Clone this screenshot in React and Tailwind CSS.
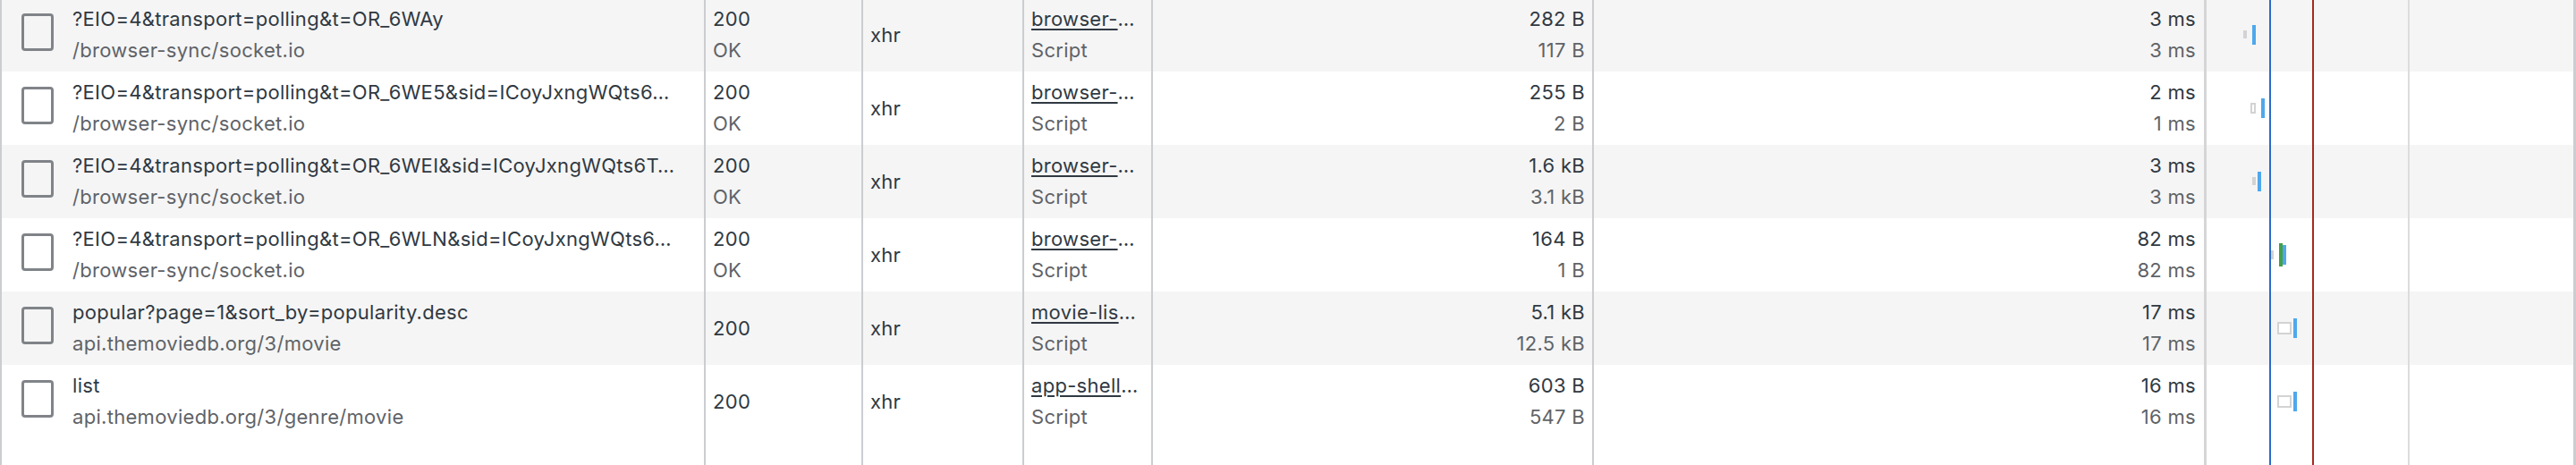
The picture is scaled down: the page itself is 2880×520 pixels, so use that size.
import React from "react";

// network panel rows, waterfall bar offsets are px from the waterfall column's left edge
const rows = [
  {
    name: "?EIO=4&transport=polling&t=OR_6WAy",
    path: "/browser-sync/socket.io",
    status: "200",
    statusText: "OK",
    type: "xhr",
    initiator: "browser-",
    size: "282 B",
    resource: "117 B",
    time: "3 ms",
    latency: "3 ms",
    bars: { gray: [41, 4, 36, 9], blue: 51 },
  },
  {
    name: "?EIO=4&transport=polling&t=OR_6WE5&sid=ICoyJxngWQts6…",
    path: "/browser-sync/socket.io",
    status: "200",
    statusText: "OK",
    type: "xhr",
    initiator: "browser-",
    size: "255 B",
    resource: "2 B",
    time: "2 ms",
    latency: "1 ms",
    bars: { box: [49, 6, 35, 12], blue: 61 },
  },
  {
    name: "?EIO=4&transport=polling&t=OR_6WEI&sid=ICoyJxngWQts6T…",
    path: "/browser-sync/socket.io",
    status: "200",
    statusText: "OK",
    type: "xhr",
    initiator: "browser-",
    size: "1.6 kB",
    resource: "3.1 kB",
    time: "3 ms",
    latency: "3 ms",
    bars: { gray: [51, 4, 36, 9], blue: 57 },
  },
  {
    name: "?EIO=4&transport=polling&t=OR_6WLN&sid=ICoyJxngWQts6…",
    path: "/browser-sync/socket.io",
    status: "200",
    statusText: "OK",
    type: "xhr",
    initiator: "browser-",
    size: "164 B",
    resource: "1 B",
    time: "82 ms",
    latency: "82 ms",
    bars: { gray: [72, 3, 36, 10], green: 81, blue: 85 },
  },
  {
    name: "popular?page=1&sort_by=popularity.desc",
    path: "api.themoviedb.org/3/movie",
    status: "200",
    type: "xhr",
    initiator: "movie-lis",
    size: "5.1 kB",
    resource: "12.5 kB",
    time: "17 ms",
    latency: "17 ms",
    bars: { box: [79, 16, 34, 14], blue: 97 },
  },
  {
    name: "list",
    path: "api.themoviedb.org/3/genre/movie",
    status: "200",
    type: "xhr",
    initiator: "app-shell",
    size: "603 B",
    resource: "547 B",
    time: "16 ms",
    latency: "16 ms",
    bars: { box: [79, 16, 34, 14], blue: 97 },
  },
];

const divider = "border-r-2 border-[#cbcdd1]";

function FileIcon() {
  return (
    <div className="mt-[17px] h-[42px] w-[36px] shrink-0 self-start rounded-[4px] border-[3px] border-[#808488]" />
  );
}

function Waterfall({ bars }) {
  return (
    <div className="relative flex-1">
      {bars.gray && (
        <div
          className="absolute bg-[#d3d3d3]"
          style={{ left: bars.gray[0], width: bars.gray[1], top: bars.gray[2], height: bars.gray[3] }}
        />
      )}
      {bars.box && (
        <div
          className="absolute border-2 border-[#d3d3d3] bg-white"
          style={{ left: bars.box[0], width: bars.box[1], top: bars.box[2], height: bars.box[3] }}
        />
      )}
      {bars.green != null && (
        <div className="absolute top-[28px] h-[26px] w-[4px] bg-[#43a047]" style={{ left: bars.green }} />
      )}
      <div className="absolute top-[30px] h-[22px] w-[4px] bg-[#4fa8ec]" style={{ left: bars.blue }} />
    </div>
  );
}

function Row({ row, striped }) {
  return (
    <div className={`flex h-[82px] shrink-0 ${striped ? "bg-[#f5f5f5]" : "bg-white"}`}>
      <div className={`flex w-[787px] shrink-0 items-center gap-[21px] pl-[22px] pr-[9px] ${divider}`}>
        <FileIcon />
        <div className="min-w-0 leading-[35px]">
          <div className="truncate text-[#303942]">{row.name}</div>
          <div className="truncate text-[#5f6368]">{row.path}</div>
        </div>
      </div>
      <div className={`flex w-[176px] shrink-0 items-center px-2 ${divider}`}>
        <div className="leading-[35px]">
          <div className="text-[#303942]">{row.status}</div>
          {row.statusText && <div className="text-[#5f6368]">{row.statusText}</div>}
        </div>
      </div>
      <div className={`flex w-[180px] shrink-0 items-center px-2 leading-[35px] text-[#303942] ${divider}`}>
        {row.type}
      </div>
      <div className={`flex w-[144px] shrink-0 items-center px-2 ${divider}`}>
        <div className="min-w-0 leading-[35px]">
          <div className="truncate text-[#303942]">
            <span className="underline decoration-[2px] underline-offset-[3px]">{row.initiator}</span>…
          </div>
          <div className="text-[#5f6368]">Script</div>
        </div>
      </div>
      <div className={`flex w-[493px] shrink-0 items-center justify-end pr-2 ${divider}`}>
        <div className="text-right leading-[35px]">
          <div className="text-[#303942]">{row.size}</div>
          <div className="text-[#5f6368]">{row.resource}</div>
        </div>
      </div>
      <div className="flex w-[685px] shrink-0 items-center justify-end border-r-[3px] border-[#d6d6d8] pr-[9px]">
        <div className="text-right leading-[35px]">
          <div className="text-[#303942]">{row.time}</div>
          <div className="text-[#5f6368]">{row.latency}</div>
        </div>
      </div>
      <Waterfall bars={row.bars} />
    </div>
  );
}

export default function App() {
  return (
    <div className="relative flex h-[520px] w-[2880px] flex-col overflow-hidden border-l-2 border-r-[3px] border-[#cbcdd1] bg-white font-['Inter',sans-serif] text-[22px] tracking-[0.3px]">
      <div className="-mt-[2px] flex flex-col">
        {rows.map((row, i) => (
          <Row key={i} row={row} striped={i % 2 === 0} />
        ))}
      </div>
      {/* empty space below the last request, columns keep their dividers */}
      <div className="flex flex-1">
        <div className={`w-[787px] shrink-0 ${divider}`} />
        <div className={`w-[176px] shrink-0 ${divider}`} />
        <div className={`w-[180px] shrink-0 ${divider}`} />
        <div className={`w-[144px] shrink-0 ${divider}`} />
        <div className={`w-[493px] shrink-0 ${divider}`} />
        <div className="w-[685px] shrink-0 border-r-[3px] border-[#d6d6d8]" />
        <div className="flex-1" />
      </div>
      {/* waterfall markers: DOMContentLoaded, load, grid */}
      <div className="absolute bottom-0 left-[2535px] top-0 w-[2px] bg-[#2a6acb]" />
      <div className="absolute bottom-0 left-[2583px] top-0 w-[2px] bg-[#a52a1e]" />
      <div className="absolute bottom-0 left-[2690px] top-0 w-[2px] bg-[#dcdcdc]" />
    </div>
  );
}
